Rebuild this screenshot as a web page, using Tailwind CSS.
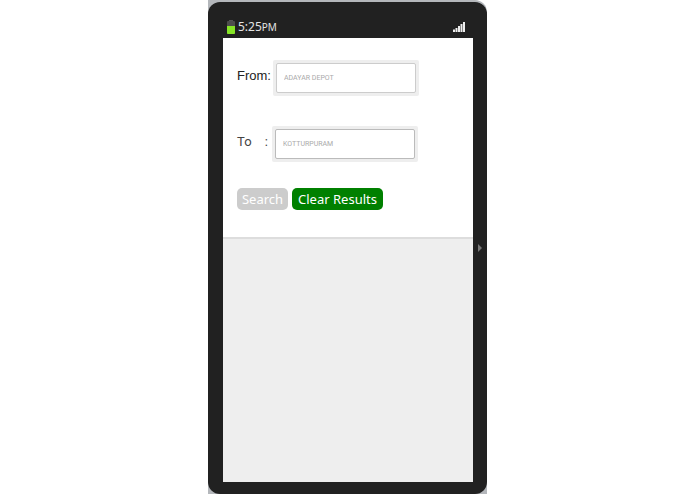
<!DOCTYPE html>
<html lang="en">
<head>
    <meta charset="UTF-8">
    <title>Bus Route Search</title>
    <meta name="viewport" content="width=device-width, initial-scale=1.0">
    <script src="https://cdn.jsdelivr.net/npm/@tailwindcss/browser@4"></script>
</head>

<body class="bg-white">
    <!-- Phone shell -->
    <div class="mx-auto w-full max-w-[279px] min-h-screen flex flex-col bg-[#b4b7bb] pt-0.5 rounded-tr-xl">
        <div class="relative flex-1 flex flex-col bg-[#212121] rounded-xl pl-[15px] pr-3.5 pb-3">
            <!-- Status bar -->
            <header class="h-9 flex items-center justify-between pt-3.5 pl-1 pr-2">
                <div class="flex items-center gap-[3px]">
                    <svg width="8" height="14" viewBox="0 0 8 14">
                        <rect x="2" y="0" width="4" height="2" fill="#555555"/>
                        <rect x="0" y="1" width="8" height="13" rx="1" fill="#4d4d4d"/>
                        <path d="M0 6h8v7a1 1 0 0 1-1 1H1a1 1 0 0 1-1-1z" fill="#86e526"/>
                    </svg>
                    <span class="font-['Noto_Sans',sans-serif] text-xs leading-4 text-[#e4e4e4]">5:25<span class="text-[10px]">PM</span></span>
                </div>
                <svg width="12" height="10" viewBox="0 0 12 10" fill="#eeeeee">
                    <rect x="0" y="7.5" width="2" height="2.5"/>
                    <rect x="2.5" y="6" width="2" height="4"/>
                    <rect x="5" y="4" width="2" height="6"/>
                    <rect x="7.5" y="2" width="2" height="8"/>
                    <rect x="10" y="0" width="2" height="10"/>
                </svg>
            </header>

            <main class="flex-1 bg-[#eeeeee]">
                <form class="bg-white border-b-2 border-[#dddddd] px-3.5 pt-[22px] pb-[27px]">
                    <div class="flex items-center mb-[30px]">
                        <label for="from" class="w-9 shrink-0 pb-1 font-['Liberation_Sans',sans-serif] text-[13px] leading-5 text-[#222222]">From:</label>
                        <div class="w-[146px] bg-[#eeeeee] rounded-xs p-[3px]">
                            <input type="text" id="from" placeholder="ADAYAR DEPOT"
                                class="block w-full h-[30px] bg-white border border-[#cccccc] rounded-xs px-[7px] font-['Roboto',sans-serif] text-[7px] placeholder:text-[#aaaaaa]">
                        </div>
                    </div>
                    <div class="flex items-center mb-[26px]">
                        <label for="to" class="w-[35px] shrink-0 flex justify-between pr-1 pb-1 font-['Roboto',sans-serif] text-[13px] leading-5 text-[#444444]">To <span>:</span></label>
                        <div class="w-[146px] bg-[#eeeeee] rounded-xs p-[3px]">
                            <input type="text" id="to" placeholder="KOTTURPURAM"
                                class="block w-full h-[30px] bg-white border border-[#bbbbbb] rounded-xs px-[7px] font-['Roboto',sans-serif] text-[7px] placeholder:text-[#aaaaaa]">
                        </div>
                    </div>
                    <div class="flex gap-1 font-['Noto_Sans',sans-serif] text-[13px] leading-[22px] text-white">
                        <button type="submit" class="bg-[#cccccc] rounded-[5px] w-[51px]">Search</button>
                        <button type="reset" class="bg-[#008000] rounded-[5px] w-[91px]">Clear Results</button>
                    </div>
                </form>
            </main>

            <!-- Drawer handle -->
            <svg class="absolute right-1 top-1/2 -translate-y-1/2" width="6" height="8" viewBox="0 0 6 8">
                <path d="M1 0l4 4-4 4z" fill="#777777"/>
            </svg>
        </div>
    </div>
</body>
</html>
